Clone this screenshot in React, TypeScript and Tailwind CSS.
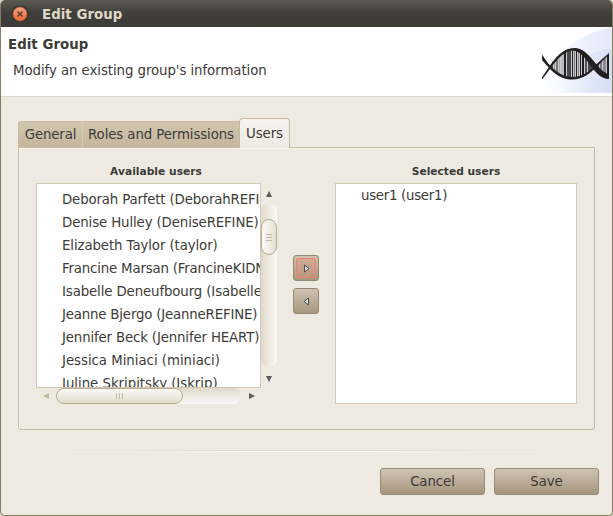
import React from "react";

const users: [string, string][] = [
  ["Deborah Parfett (DeborahREFINE)", "tracking-[-0.16px]"],
  ["Denise Hulley (DeniseREFINE)", "tracking-[-0.12px]"],
  ["Elizabeth Taylor (taylor)", "tracking-[-0.1px]"],
  ["Francine Marsan (FrancineKIDNEY)", "tracking-[-0.18px]"],
  ["Isabelle Deneufbourg (IsabelleREFINE)", "tracking-[-0.12px]"],
  ["Jeanne Bjergo (JeanneREFINE)", "tracking-[-0.18px]"],
  ["Jennifer Beck (Jennifer HEART)", "tracking-[-0.15px]"],
  ["Jessica Miniaci (miniaci)", "tracking-[-0.03px]"],
  ["Juline Skripitsky (Jskrip)", "tracking-[-0.03px]"],
];

const bars: [number, number, string][] = [
  [10, 1, "#555"], [12, 1, "#999"], [14, 2, "#777"], [17, 1, "#aaa"], [19, 3, "#bbb"],
  [22, 2, "#231f20"], [25, 4, "#4a4a4a"], [30, 1, "#231f20"], [32, 1, "#777"], [34, 1, "#231f20"],
  [36, 1, "#888"], [38, 1, "#231f20"], [40, 2, "#231f20"], [43, 2, "#555"], [46, 4, "#4a4a4a"], [51, 2, "#444"],
  [56, 1, "#555"], [58, 2, "#777"], [61, 3, "#889"], [65, 2, "#231f20"],
];

function Dna() {
  return (
    <svg className="block" width="84" height="66" viewBox="528 27 84 66">
      <defs>
        <linearGradient id="sky" x1="0" x2="1">
          <stop offset="0" stopColor="#ffffff" />
          <stop offset="1" stopColor="#e2e9fa" />
        </linearGradient>
        <linearGradient id="haze" x1="0" x2="1">
          <stop offset="0" stopColor="#d3def6" stopOpacity="0" />
          <stop offset="1" stopColor="#cbd7f3" stopOpacity=".6" />
        </linearGradient>
        <clipPath id="helix">
          <path d="M549 66C558 55 564 49 574 49C584 49 591 58 597 66C589 75 582 79 572 79C562 79 556 73 549 66ZM597 66L609 54V77Z" />
        </clipPath>
      </defs>
      <path d="M541 93C546 60 575 34 612 27V93Z" fill="url(#sky)" />
      <path d="M560 93C568 63 590 50 612 49V93Z" fill="url(#haze)" />
      <g clipPath="url(#helix)">
        <path d="M549 48H609V80H549Z" fill="#c9cbd0" />
        {bars.map(([x, w, c]) => <rect key={x} x={542 + x} y="48" width={w} height="32" fill={c} shapeRendering="crispEdges" />)}
      </g>
      <path d="M542 54.500V60C550 69 558 79.500 572 79.500C584 79.500 591 72 597 66.500L609 54.500V53L596 64.500C590 71 583 77 572 77C561 77 550 68 542 54.500Z" fill="#231f20" />
      <path d="M542 77.500C552 63 560 48 574.500 48C590 48 597 72 609 74V79C593 79 587 51.500 573 50.500C562 50.500 553 65 543 78.500L542 79Z" fill="#231f20" />
    </svg>
  );
}

function Tri({ dir, color = "#5c5b57" }: { dir: "u" | "d" | "l" | "r"; color?: string }) {
  const d = { u: "M3 0L6 6H0Z", d: "M3 6L6 0H0Z", l: "M0 3L6 0V6Z", r: "M6 3L0 0V6Z" }[dir];
  return <svg className="block" width="6" height="6"><path d={d} fill={color} /></svg>;
}

function Move({ right = false }: { right?: boolean }) {
  return (
    <button className="relative flex h-[26px] w-[26px] items-center justify-center rounded-[3px] border border-[#958872] bg-gradient-to-b from-[#cfc2b1] to-[#a89880] p-0">
      {right && <span className="absolute inset-[2px] rounded-[2px] border border-[#f3826a] bg-[#d98c76]/35" />}
      <svg className="relative block" width="7" height="9">
        <path d={right ? "M1.500 1V8L6 4.500Z" : "M5.500 1V8L1 4.500Z"} fill="#dedede" stroke="#4c4c4c" />
      </svg>
    </button>
  );
}

export default function App() {
  return (
    <div className="h-[516px] w-[613px] overflow-hidden bg-[#d9d2c4] font-['DejaVu_Sans',sans-serif] text-[13.33px] tracking-[-0.07px] text-[#3c3b37]">
      <div className="flex h-[516px] flex-col overflow-hidden rounded-t-[5px] rounded-b-[5px] border-x border-b border-[#887a63] bg-[#eeeae2]">
        <div className="flex h-[27px] shrink-0 items-center bg-gradient-to-b from-[#5b5952] via-[#403e39] to-[#3c3b37] pl-[10px] text-[#dfd8c8]">
          <svg className="block" width="18" height="18">
            <defs><linearGradient id="orb" x2="0" y2="1"><stop stopColor="#f9a583" /><stop offset="1" stopColor="#ec6435" /></linearGradient></defs>
            <circle cx="9" cy="9" r="8.500" fill="#33322e" />
            <circle cx="9" cy="9" r="7" fill="url(#orb)" stroke="#b65d3d" strokeWidth=".7" />
            <path d="M6.500 6.500L11.500 11.500M11.500 6.500L6.500 11.500" stroke="#56372b" strokeWidth="1.4" />
          </svg>
          <h1 className="ml-[13px] pt-[2px] text-[13.33px] font-bold tracking-[0.05px]">Edit Group</h1>
        </div>
        <header className="flex h-[69px] shrink-0 justify-between bg-white">
          <div className="pl-[7px] pt-[8px]">
            <h2 className="font-bold leading-5 tracking-[0.05px]">Edit Group</h2>
            <p className="ml-[5px] mt-[6px] leading-5">Modify an existing group's information</p>
          </div>
          <Dna />
        </header>
        <div className="h-[25px] shrink-0 border-t border-[#ddd5c6]" />
        <nav className="flex h-[26px] shrink-0 items-end pl-[17px]">
          <div className="flex h-[26px] w-[64px] items-center justify-center rounded-tl-[3px] border border-r-0 border-[#c8b99f] bg-gradient-to-b from-[#d2c6b0] to-[#c6b79d] pt-[2px] tracking-[-0.15px]">General</div>
          <div className="flex h-[26px] w-[157px] items-center justify-center border border-r-0 border-[#c8b99f] border-l-[#d5cab7] bg-gradient-to-b from-[#d2c6b0] to-[#c6b79d] pt-[2px] tracking-[-0.1px]">Roles and Permissions</div>
          <div className="z-10 -mb-px flex h-[30px] w-[51px] items-center justify-center rounded-t-[4px] border border-b-0 border-[#c8b99f] bg-gradient-to-b from-[#f7f4ef] to-[#eeeae2]">Users</div>
        </nav>
        <main className="ml-[17px] flex h-[283px] w-[577px] shrink-0 rounded-b-[3px] border border-[#c8b99f] pl-[17px] pt-[15px] shadow-[inset_1px_1px_#f7f4ef]">
          <section className="w-[241px]">
            <h3 className="h-5 w-[240px] pt-px text-center text-[10.67px] font-bold leading-4 tracking-[0.03px]">Available users</h3>
            <div className="flex h-[205px]">
              <ul className="h-[205px] w-[225px] overflow-hidden whitespace-nowrap border border-[#d3c8b4] bg-white pl-[25px] pt-[4px] leading-[23px]">
                {users.map(([name, spacing]) => <li key={name} className={spacing}>{name}</li>)}
              </ul>
              <div className="flex w-4 flex-col items-center pt-[8px]">
                <Tri dir="u" />
                <div className="mt-[6px] h-[164px] w-4 rounded-[8px] bg-gradient-to-r from-[#e0d8ca] to-[#fbfaf7] pt-4">
                  <div className="flex h-9 w-4 flex-col items-center justify-center gap-[2px] rounded-[8px] border border-[#b9aa8e] bg-gradient-to-r from-[#fbfaf7] to-[#e7e0d3]">
                    <i className="h-px w-[6px] bg-[#c6b99f]" /><i className="h-px w-[6px] bg-[#c6b99f]" /><i className="h-px w-[6px] bg-[#c6b99f]" />
                  </div>
                </div>
                <div className="mt-[9px]"><Tri dir="d" /></div>
              </div>
            </div>
            <div className="flex h-4 w-[225px] items-center pl-[7px]">
              <Tri dir="l" color="#c5b79e" />
              <div className="ml-[7px] h-4 w-[185px] rounded-[8px] bg-gradient-to-b from-[#e0d8ca] to-[#fbfaf7]">
                <div className="flex h-4 w-[127px] items-center justify-center gap-[2px] rounded-[8px] border border-[#b9aa8e] bg-gradient-to-b from-[#fbfaf7] to-[#e3dccd]">
                  <i className="h-[6px] w-px bg-[#c6b99f]" /><i className="h-[6px] w-px bg-[#c6b99f]" /><i className="h-[6px] w-px bg-[#c6b99f]" />
                </div>
              </div>
              <div className="ml-[8px]"><Tri dir="r" /></div>
            </div>
          </section>
          <div className="ml-[16px] flex w-[42px] flex-col gap-[7px] pt-[92px]"><Move right /><Move /></div>
          <section>
            <h3 className="h-5 w-[242px] pt-px text-center text-[10.67px] font-bold leading-4 tracking-normal">Selected users</h3>
            <div className="h-[221px] w-[242px] border border-[#d3c8b4] bg-white pl-[25px] leading-[23px] tracking-[-0.28px]">user1 (user1)</div>
          </section>
        </main>
        <div className="mx-[15px] mt-[20px] h-px shrink-0 bg-gradient-to-r from-transparent via-[#e0d8c8] to-transparent" />
        <div className="mx-[15px] h-px shrink-0 bg-gradient-to-r from-transparent via-[#faf8f3] to-transparent" />
        <footer className="mt-[16px] flex justify-end gap-[9px] pr-[13px]">
          {["Cancel", "Save"].map((b) => (
            <button key={b} className="h-[27px] w-[105px] rounded-[3px] border border-[#998b75] bg-gradient-to-b from-[#d0c4b5] to-[#a5957d] leading-[25px]">{b}</button>
          ))}
        </footer>
      </div>
    </div>
  );
}
